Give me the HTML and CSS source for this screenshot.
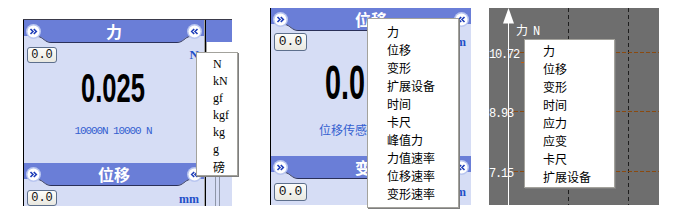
FILE: index.html
```html
<!DOCTYPE html>
<html>
<head>
<meta charset="utf-8">
<link rel="stylesheet" href="styles.css">
</head>
<body>
<div class="strip">
  <div class="shot s1">
    <div class="panel p1">
      <div class="hdr">
        <span class="cap"><svg width="30" height="23" viewBox="0 0 30 23"><path class="capfill" d="M0 0H30V22H27C21 22 19 16.5 14 16L0 16Z"/><path class="capline" d="M14 16.5C19 17 21 22.5 27 22.5H30"/><circle cx="9.5" cy="11.5" r="7.5" class="ring"/><circle cx="9.5" cy="11.5" r="6" class="dot"/><path class="chev" d="M6.5 9l2.5 2.5-2.5 2.5M9.8 9l2.5 2.5-2.5 2.5"/></svg></span>
        <span class="tab">力</span>
        <span class="cap flip"><svg width="30" height="23" viewBox="0 0 30 23"><path class="capfill" d="M0 0H30V22H27C21 22 19 16.5 14 16L0 16Z"/><path class="capline" d="M14 16.5C19 17 21 22.5 27 22.5H30"/><circle cx="9.5" cy="11.5" r="7.5" class="ring"/><circle cx="9.5" cy="11.5" r="6" class="dot"/><path class="chev" d="M6.5 9l2.5 2.5-2.5 2.5M9.8 9l2.5 2.5-2.5 2.5"/></svg></span>
      </div>
      <div class="bd bd1">
        <div class="row"><span class="btn">0.0</span><span class="unit">N</span></div>
        <div class="big big1"><span>0.025</span></div>
        <div class="info">10000N 10000 N</div>
      </div>
      <div class="hdr">
        <span class="cap"><svg width="30" height="23" viewBox="0 0 30 23"><path class="capfill" d="M0 0H30V22H27C21 22 19 16.5 14 16L0 16Z"/><path class="capline" d="M14 16.5C19 17 21 22.5 27 22.5H30"/><circle cx="9.5" cy="11.5" r="7.5" class="ring"/><circle cx="9.5" cy="11.5" r="6" class="dot"/><path class="chev" d="M6.5 9l2.5 2.5-2.5 2.5M9.8 9l2.5 2.5-2.5 2.5"/></svg></span>
        <span class="tab">位移</span>
        <span class="cap flip"><svg width="30" height="23" viewBox="0 0 30 23"><path class="capfill" d="M0 0H30V22H27C21 22 19 16.5 14 16L0 16Z"/><path class="capline" d="M14 16.5C19 17 21 22.5 27 22.5H30"/><circle cx="9.5" cy="11.5" r="7.5" class="ring"/><circle cx="9.5" cy="11.5" r="6" class="dot"/><path class="chev" d="M6.5 9l2.5 2.5-2.5 2.5M9.8 9l2.5 2.5-2.5 2.5"/></svg></span>
      </div>
      <div class="bd bdlow">
        <div class="row"><span class="btn">0.0</span><span class="unit mm">mm</span></div>
      </div>
    </div>
    <div class="sliver">
      <div class="slhdr"></div>
      <div class="slbody"></div>
      <div class="slfoot"><i></i><i></i></div>
    </div>
    <ul class="menu m1">
      <li>N</li><li>kN</li><li>gf</li><li>kgf</li><li>kg</li><li>g</li><li class="cjk">磅</li>
    </ul>
  </div>

  <div class="shot s2">
    <div class="panel p2">
      <div class="hdr">
        <span class="cap"><svg width="30" height="23" viewBox="0 0 30 23"><path class="capfill" d="M0 0H30V22H27C21 22 19 16.5 14 16L0 16Z"/><path class="capline" d="M14 16.5C19 17 21 22.5 27 22.5H30"/><circle cx="9.5" cy="11.5" r="7.5" class="ring"/><circle cx="9.5" cy="11.5" r="6" class="dot"/><path class="chev" d="M6.5 9l2.5 2.5-2.5 2.5M9.8 9l2.5 2.5-2.5 2.5"/></svg></span>
        <span class="tab">位移</span>
        <span class="cap flip"><svg width="30" height="23" viewBox="0 0 30 23"><path class="capfill" d="M0 0H30V22H27C21 22 19 16.5 14 16L0 16Z"/><path class="capline" d="M14 16.5C19 17 21 22.5 27 22.5H30"/><circle cx="9.5" cy="11.5" r="7.5" class="ring"/><circle cx="9.5" cy="11.5" r="6" class="dot"/><path class="chev" d="M6.5 9l2.5 2.5-2.5 2.5M9.8 9l2.5 2.5-2.5 2.5"/></svg></span>
      </div>
      <div class="bd bd2">
        <div class="row"><span class="btn">0.0</span><span class="unit mm">mm</span></div>
        <div class="big big2"><span>0.0</span></div>
        <div class="info info2">位移传感</div>
      </div>
      <div class="hdr">
        <span class="cap"><svg width="30" height="23" viewBox="0 0 30 23"><path class="capfill" d="M0 0H30V22H27C21 22 19 16.5 14 16L0 16Z"/><path class="capline" d="M14 16.5C19 17 21 22.5 27 22.5H30"/><circle cx="9.5" cy="11.5" r="7.5" class="ring"/><circle cx="9.5" cy="11.5" r="6" class="dot"/><path class="chev" d="M6.5 9l2.5 2.5-2.5 2.5M9.8 9l2.5 2.5-2.5 2.5"/></svg></span>
        <span class="tab">变形</span>
        <span class="cap flip"><svg width="30" height="23" viewBox="0 0 30 23"><path class="capfill" d="M0 0H30V22H27C21 22 19 16.5 14 16L0 16Z"/><path class="capline" d="M14 16.5C19 17 21 22.5 27 22.5H30"/><circle cx="9.5" cy="11.5" r="7.5" class="ring"/><circle cx="9.5" cy="11.5" r="6" class="dot"/><path class="chev" d="M6.5 9l2.5 2.5-2.5 2.5M9.8 9l2.5 2.5-2.5 2.5"/></svg></span>
      </div>
      <div class="bd bdlow">
        <div class="row"><span class="btn">0.0</span><span class="unit mm">mm</span></div>
      </div>
    </div>
    <ul class="menu m2 cjk">
      <li>力</li><li>位移</li><li>变形</li><li>扩展设备</li><li>时间</li><li>卡尺</li><li>峰值力</li><li>力值速率</li><li>位移速率</li><li>变形速率</li>
    </ul>
  </div>

  <div class="shot s3">
    <svg class="chart" width="170" height="197" viewBox="0 0 170 197">
      <line class="vgrid" x1="79.5" y1="0" x2="79.5" y2="197"/>
      <line class="vgrid" x1="139.5" y1="0" x2="139.5" y2="197"/>
      <line class="hgrid" x1="19" y1="44.5" x2="170" y2="44.5"/>
      <line class="hgrid" x1="19" y1="103.5" x2="170" y2="103.5"/>
      <line class="hgrid" x1="19" y1="163.5" x2="170" y2="163.5"/>
      <line class="axis" x1="19.5" y1="10" x2="19.5" y2="197"/>
      <polygon class="arrow" points="19.5,0 14,15.5 25,15.5"/>
      <line class="tick" x1="32" y1="54.5" x2="35" y2="54.5"/>
      <text class="lab" x="0" y="50">10.72</text>
      <text class="lab" x="0" y="109">8.93</text>
      <text class="lab" x="0" y="169">7.15</text>
      <text class="axname" x="27" y="27">力</text>
      <text class="lab" x="44" y="27">N</text>
    </svg>
    <ul class="menu m3 cjk">
      <li>力</li><li>位移</li><li>变形</li><li>时间</li><li>应力</li><li>应变</li><li>卡尺</li><li>扩展设备</li>
    </ul>
  </div>
</div>
</body>
</html>
```

FILE: styles.css
```css
html, body {
  margin: 0;
  padding: 0;
  background: #fff;
}
body {
  width: 693px;
  height: 210px;
  overflow: hidden;
  font-family: "Liberation Sans", Arial, sans-serif;
}
.strip {
  display: flex;
  align-items: flex-start;
}
.shot {
  position: relative;
  flex: none;
}
.s1 {
  margin: 19px 0 0 23px;
  height: 186px;
  display: flex;
  border-top: 1px solid #3a3a4a;
}
.s2 {
  margin: 8px 0 0 38px;
  height: 197px;
  display: flex;
  width: 201px;
}
.s3 {
  margin: 8px 0 0 18px;
  width: 170px;
  height: 197px;
  background: #6e6e6e;
}
.panel {
  box-sizing: border-box;
  border-left: 1px solid #000;
  background: #d6ddf5;
  display: flex;
  flex-direction: column;
  overflow: hidden;
}
.p1 {
  width: 182px;
  border-right: 1px solid #a4a4a4;
}
.p2 {
  width: 201px;
}
.hdr {
  display: flex;
  height: 23px;
  flex: none;
  background: #d6ddf5;
}
.cap {
  width: 30px;
  height: 23px;
  flex: none;
}
.cap svg {
  display: block;
}
.flip {
  transform: scaleX(-1);
}
.capfill {
  fill: #6a7ed7;
}
.capline {
  fill: none;
  stroke: #2a3059;
  stroke-width: 1;
}
.ring {
  fill: #b9c6f0;
}
.dot {
  fill: #fff;
}
.chev {
  fill: none;
  stroke: #1d3cb8;
  stroke-width: 1.6;
}
.tab {
  flex: 1;
  box-sizing: border-box;
  height: 23px;
  background: #6a7ed7;
  border-bottom: 1px solid #2a3059;
  color: #fff;
  font-family: "Noto Sans CJK SC", sans-serif;
  font-weight: bold;
  font-size: 16px;
  line-height: 22px;
  text-align: center;
}
.bd {
  box-sizing: border-box;
  padding: 4px 5px 0 3px;
  flex: none;
}
.bd1 {
  height: 120px;
}
.bd2 {
  height: 125px;
  padding-top: 2px;
}
.bdlow {
  flex: 1;
}
.row {
  display: flex;
  justify-content: space-between;
  align-items: flex-start;
}
.btn {
  box-sizing: border-box;
  width: 30px;
  height: 16px;
  border: 1px solid #5d6f8c;
  border-radius: 3px;
  background: linear-gradient(#fdfdfb, #e9e8e0);
  font-family: "Liberation Mono", monospace;
  font-size: 12px;
  line-height: 14px;
  text-align: center;
  color: #111;
}
.p2 .btn {
  width: 33px;
  height: 18px;
  line-height: 16px;
  font-size: 13px;
}
.unit {
  color: #1f4fc8;
  font-family: "Liberation Serif", serif;
  font-weight: bold;
  font-size: 13px;
  line-height: 12px;
  margin-top: 2px;
}
.mm {
  margin-top: 4px;
  font-size: 12px;
  line-height: 10px;
}
.big {
  text-align: center;
  font-family: "Liberation Sans", Arial, sans-serif;
  font-weight: bold;
  color: #000;
}
.big span {
  display: inline-block;
  transform: scaleX(0.64);
}
.big1 {
  font-size: 40px;
  line-height: 40px;
  margin-top: 5px;
}
.big2 {
  font-size: 48px;
  line-height: 48px;
  margin-top: 8px;
  text-align: left;
  padding-left: 51px;
}
.big2 span {
  transform-origin: left center;
  transform: scaleX(0.6);
}
.info {
  margin-top: 17px;
  text-align: center;
  color: #3460d0;
  font-family: "Liberation Mono", monospace;
  font-size: 11px;
  letter-spacing: -1.1px;
  line-height: 12px;
}
.info2 {
  margin-top: 16px;
  text-align: left;
  padding-left: 45px;
  font-family: "Noto Sans CJK SC", sans-serif;
  font-size: 12px;
  letter-spacing: 0;
  line-height: 14px;
}
.sliver {
  width: 27px;
  box-sizing: border-box;
  border-left: 1px solid #000;
  display: flex;
  flex-direction: column;
  background: #fff;
}
.slhdr {
  height: 22px;
  background: #6a7ed7;
}
.slbody {
  flex: 1;
  border-left: 1px solid #a0a0a0;
}
.slfoot {
  height: 37px;
  background: #d6ddf5;
  display: flex;
  gap: 3px;
  padding-left: 9px;
}
.slfoot i {
  width: 1px;
  background: #8e96a8;
}
.menu {
  position: absolute;
  margin: 0;
  list-style: none;
  background: #fff;
  border: 1px solid #a3a29c;
  box-shadow: 1px 1px 0 #7e7e7e;
  box-sizing: border-box;
  color: #000;
}
.cjk {
  font-family: "Noto Sans CJK SC", sans-serif;
}
.m1 {
  left: 173px;
  top: 32px;
  width: 42px;
  height: 124px;
  padding: 3px 0 0 16px;
  font-family: "Liberation Serif", serif;
  font-size: 12px;
  line-height: 17px;
}
.m1 .cjk {
  font-size: 12px;
}
.m2 {
  left: 97px;
  top: 10px;
  width: 92px;
  height: 190px;
  padding: 4px 0 0 19px;
  font-size: 12px;
  line-height: 18px;
}
.m3 {
  left: 35px;
  top: 31px;
  width: 91px;
  height: 149px;
  padding: 2px 0 0 18px;
  font-size: 12px;
  line-height: 18px;
}
.chart {
  display: block;
}
.vgrid {
  stroke: #1e1e1e;
  stroke-width: 1;
  stroke-dasharray: 4 3;
}
.hgrid {
  stroke: #8a4a10;
  stroke-width: 1;
  stroke-dasharray: 4 2;
}
.axis {
  stroke: #fff;
  stroke-width: 1;
}
.arrow {
  fill: #fff;
}
.tick {
  stroke: #c06010;
}
.lab {
  fill: #fff;
  font-family: "Liberation Mono", monospace;
  font-size: 12px;
  letter-spacing: -1.2px;
}
.axname {
  fill: #fff;
  font-family: "Noto Sans CJK SC", sans-serif;
  font-size: 12px;
}
```
